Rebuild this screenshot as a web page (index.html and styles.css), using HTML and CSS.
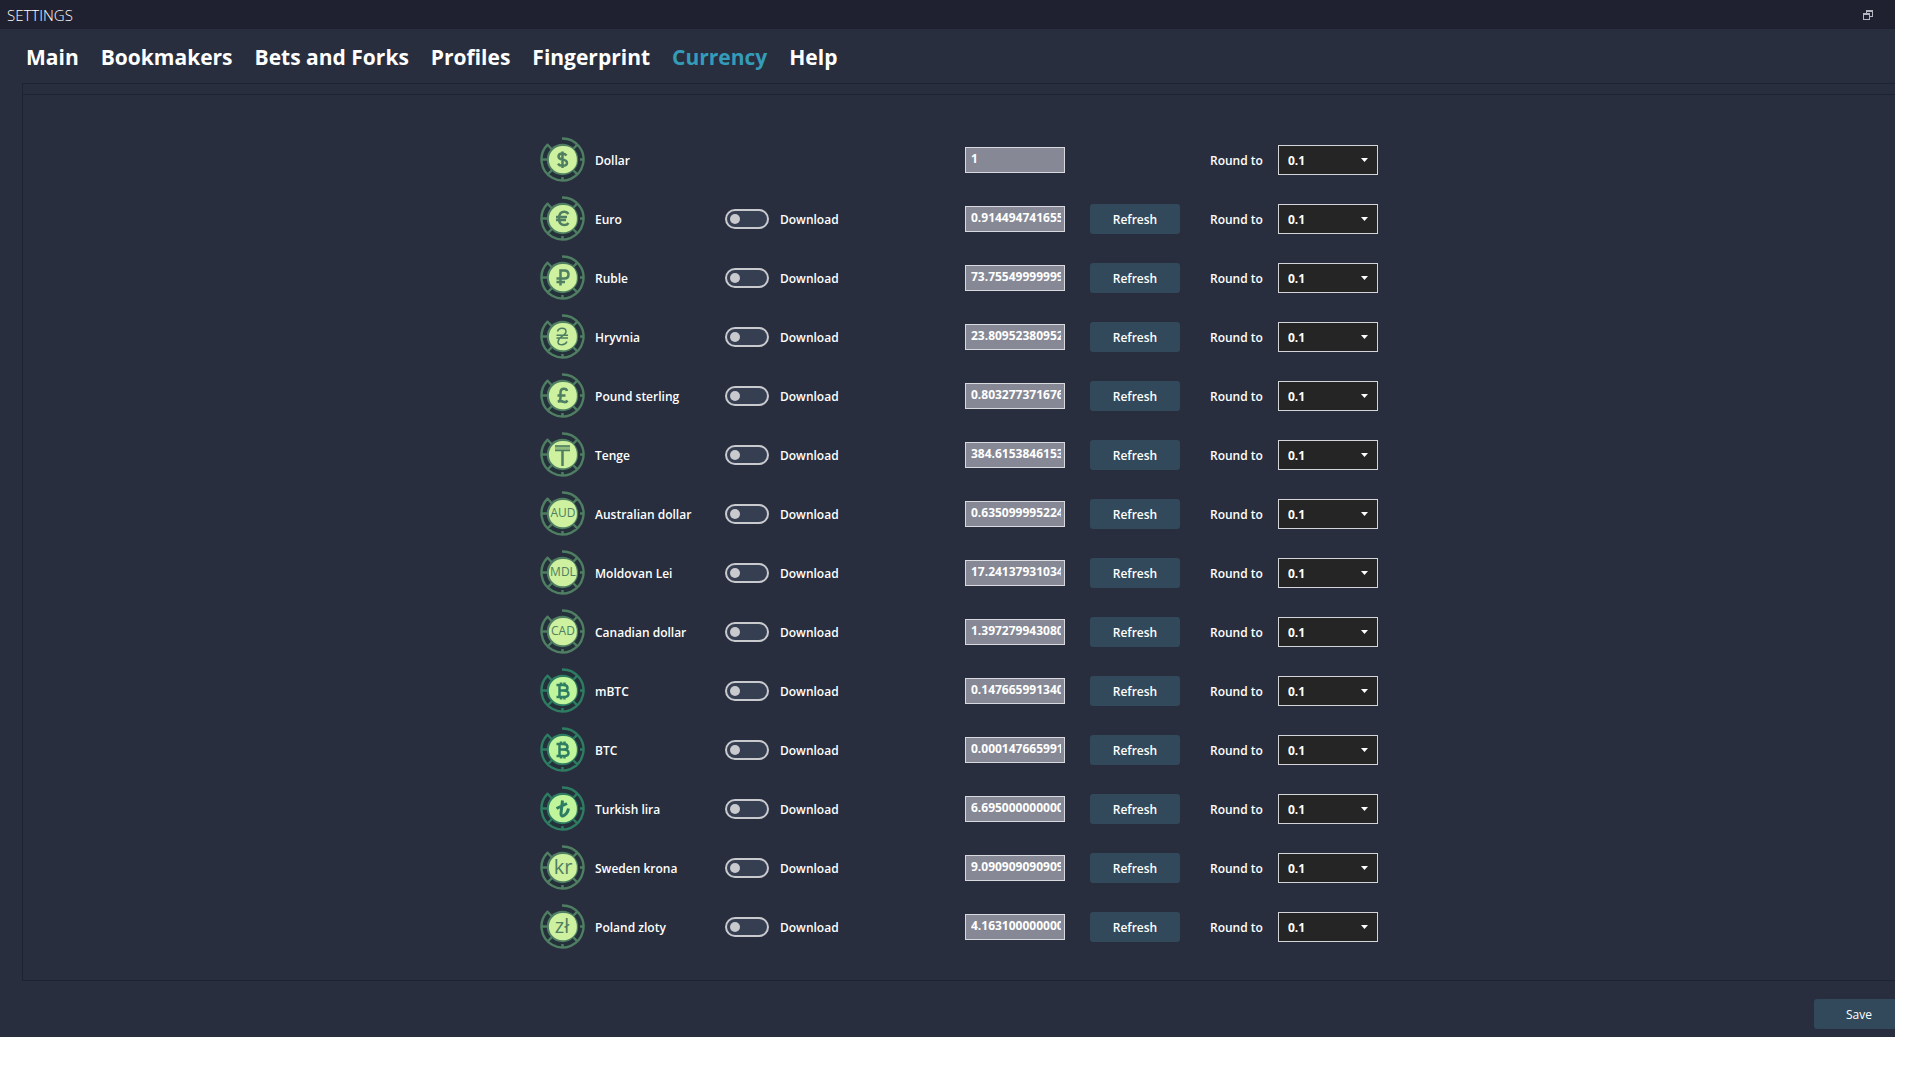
FILE: index.html
```html
<!DOCTYPE html>
<html lang="en">
<head>
<meta charset="utf-8">
<title>Settings</title>
<link rel="stylesheet" href="styles.css">
</head>
<body>
<svg class="defs" aria-hidden="true">
  <symbol id="coin" viewBox="0 0 45 45">
    <path class="ring-fill" d="M22.500 1.500A21 21 0 1 1 7.600 7.700L22.500 22.500z"/>
    <path class="ring" stroke-width="2.4" stroke-linejoin="round" d="M22 1.500A21 21 0 1 1 7.600 7.700L12 12.500M37.300 7.700L32.500 12.500M43.500 22.500H40M37.300 37.300L33 33M22.500 43.500V40M7.700 37.300L12 33M1.500 22.500H8"/>
    <circle class="rim" cx="22.500" cy="22.500" r="15.700"/>
    <path class="face" d="M22.500 9C28 8.800 32 10.500 34.500 14C37 18 37.500 23 36.300 27.500C34 33 28.500 36.500 22.500 36.300A13.600 13.600 0 0 1 22.500 9z"/>
  </symbol>
  <symbol id="btc" viewBox="0 0 45 45">
    <path class="sign" d="M16.500 17H23.500Q27.500 17 27.500 20Q27.500 22.500 23.500 22.500H19.500M23.500 22.500Q28.500 22.500 28.500 26Q28.500 29 23.500 29H16.500M19.500 17V29M21 14.500V17M24.500 14.500V17M21 29V31.500M24.500 29V31.500"/>
  </symbol>
</svg>
<div class="window">
  <header class="titlebar">
    <h1 class="title">SETTINGS</h1>
    <button class="restore" type="button" aria-label="Restore window">
      <svg width="10" height="10" viewBox="0 0 10 10"><path d="M3 0H10V7H7V6H9V2H4V3H3zM0 3H7V10H0zM1 5V9H6V5z" fill-rule="evenodd"/></svg>
    </button>
  </header>
  <nav class="tabs">
    <a href="#main">Main</a>
    <a href="#bookmakers">Bookmakers</a>
    <a href="#bets">Bets and Forks</a>
    <a href="#profiles">Profiles</a>
    <a href="#fingerprint">Fingerprint</a>
    <a href="#currency" class="active" aria-current="page">Currency</a>
    <a href="#help">Help</a>
  </nav>
  <form class="form">
    <main class="panel">
      <div class="list">
        <div class="row">
          <svg class="coin" viewBox="0 0 45 45"><use href="#coin"/><path class="sign" d="M26.500 18.500Q25 16.500 22.500 16.500Q18.500 16.500 18.500 19.500Q18.500 21.800 22.500 22.500Q27 23.300 27 26Q27 28.800 22.500 28.800Q19.500 28.800 18 26.700M22.500 14.500V31"/></svg>
          <label class="name" for="v1">Dollar</label>
          <input class="value" id="v1" type="text" value="1">
          <label class="round" for="r1">Round to</label>
          <select class="select" id="r1"><option>0.1</option></select>
        </div>
        <div class="row">
          <svg class="coin" viewBox="0 0 45 45"><use href="#coin"/><path class="sign" d="M28.500 18Q27 15.800 24.500 15.800Q19 15.800 19 22.500Q19 29 24.500 29Q27 29 28.500 27M16 21H27M16 24H26"/></svg>
          <label class="name" for="v2">Euro</label>
          <input class="toggle" id="d2" type="checkbox"><label class="download" for="d2">Download</label>
          <input class="value" id="v2" type="text" value="0.914494741655">
          <button class="button" type="button">Refresh</button>
          <label class="round" for="r2">Round to</label>
          <select class="select" id="r2"><option>0.1</option></select>
        </div>
        <div class="row">
          <svg class="coin" viewBox="0 0 45 45"><use href="#coin"/><path class="sign" d="M20.500 30.500V15.500H24.500Q28.500 15.500 28.500 19.500Q28.500 23.500 24.500 23.500H16.500M16.500 27H25"/></svg>
          <label class="name" for="v3">Ruble</label>
          <input class="toggle" id="d3" type="checkbox"><label class="download" for="d3">Download</label>
          <input class="value" id="v3" type="text" value="73.7554999999999">
          <button class="button" type="button">Refresh</button>
          <label class="round" for="r3">Round to</label>
          <select class="select" id="r3"><option>0.1</option></select>
        </div>
        <div class="row">
          <svg class="coin" viewBox="0 0 45 45"><use href="#coin"/><path class="sign thin" d="M17.500 17.500Q18.500 14.300 22 14.300Q26 14.300 26 17.500Q26 20 21.500 22.500Q18 25 18 28Q18 30.800 22 30.800Q25.500 30.800 27 27.500M16.500 21.200H28M16.500 24H28"/></svg>
          <label class="name" for="v4">Hryvnia</label>
          <input class="toggle" id="d4" type="checkbox"><label class="download" for="d4">Download</label>
          <input class="value" id="v4" type="text" value="23.8095238095238">
          <button class="button" type="button">Refresh</button>
          <label class="round" for="r4">Round to</label>
          <select class="select" id="r4"><option>0.1</option></select>
        </div>
        <div class="row">
          <svg class="coin" viewBox="0 0 45 45"><use href="#coin"/><path class="sign" d="M27 18Q26.500 15.800 24 15.800Q20.500 15.800 20.500 19.500V25Q20.500 28 17.800 28.700Q21 27.500 23.500 28.800Q26 29.800 27.500 27.500M17.500 22.500H25.500"/></svg>
          <label class="name" for="v5">Pound sterling</label>
          <input class="toggle" id="d5" type="checkbox"><label class="download" for="d5">Download</label>
          <input class="value" id="v5" type="text" value="0.803277371676">
          <button class="button" type="button">Refresh</button>
          <label class="round" for="r5">Round to</label>
          <select class="select" id="r5"><option>0.1</option></select>
        </div>
        <div class="row">
          <svg class="coin" viewBox="0 0 45 45"><use href="#coin"/><path class="tint" d="M15 13.500H30V19H15z"/><path class="sign thin" d="M15 14H30M15 18.500H30"/><path class="sign" d="M22.500 18.500V34"/></svg>
          <label class="name" for="v6">Tenge</label>
          <input class="toggle" id="d6" type="checkbox"><label class="download" for="d6">Download</label>
          <input class="value" id="v6" type="text" value="384.615384615385">
          <button class="button" type="button">Refresh</button>
          <label class="round" for="r6">Round to</label>
          <select class="select" id="r6"><option>0.1</option></select>
        </div>
        <div class="row">
          <svg class="coin" viewBox="0 0 45 45"><use href="#coin"/><text class="code" x="23" y="26">AUD</text></svg>
          <label class="name" for="v7">Australian dollar</label>
          <input class="toggle" id="d7" type="checkbox"><label class="download" for="d7">Download</label>
          <input class="value" id="v7" type="text" value="0.635099995224">
          <button class="button" type="button">Refresh</button>
          <label class="round" for="r7">Round to</label>
          <select class="select" id="r7"><option>0.1</option></select>
        </div>
        <div class="row">
          <svg class="coin" viewBox="0 0 45 45"><use href="#coin"/><text class="code" x="23" y="26">MDL</text></svg>
          <label class="name" for="v8">Moldovan Lei</label>
          <input class="toggle" id="d8" type="checkbox"><label class="download" for="d8">Download</label>
          <input class="value" id="v8" type="text" value="17.2413793103448">
          <button class="button" type="button">Refresh</button>
          <label class="round" for="r8">Round to</label>
          <select class="select" id="r8"><option>0.1</option></select>
        </div>
        <div class="row">
          <svg class="coin" viewBox="0 0 45 45"><use href="#coin"/><text class="code" x="23" y="26">CAD</text></svg>
          <label class="name" for="v9">Canadian dollar</label>
          <input class="toggle" id="d9" type="checkbox"><label class="download" for="d9">Download</label>
          <input class="value" id="v9" type="text" value="1.397279943080">
          <button class="button" type="button">Refresh</button>
          <label class="round" for="r9">Round to</label>
          <select class="select" id="r9"><option>0.1</option></select>
        </div>
        <div class="row">
          <svg class="coin deep" viewBox="0 0 45 45"><use href="#coin"/><use href="#btc"/></svg>
          <label class="name" for="v10">mBTC</label>
          <input class="toggle" id="d10" type="checkbox"><label class="download" for="d10">Download</label>
          <input class="value" id="v10" type="text" value="0.147665991340">
          <button class="button" type="button">Refresh</button>
          <label class="round" for="r10">Round to</label>
          <select class="select" id="r10"><option>0.1</option></select>
        </div>
        <div class="row">
          <svg class="coin deep" viewBox="0 0 45 45"><use href="#coin"/><use href="#btc"/></svg>
          <label class="name" for="v11">BTC</label>
          <input class="toggle" id="d11" type="checkbox"><label class="download" for="d11">Download</label>
          <input class="value" id="v11" type="text" value="0.000147665991">
          <button class="button" type="button">Refresh</button>
          <label class="round" for="r11">Round to</label>
          <select class="select" id="r11"><option>0.1</option></select>
        </div>
        <div class="row">
          <svg class="coin deep" viewBox="0 0 45 45"><use href="#coin"/><path class="sign heavy" d="M22.500 14.500L21 27Q20.800 30.500 23 30Q27.500 28 28.500 22.500M16.500 22.500L27 17.500"/></svg>
          <label class="name" for="v12">Turkish lira</label>
          <input class="toggle" id="d12" type="checkbox"><label class="download" for="d12">Download</label>
          <input class="value" id="v12" type="text" value="6.695000000000">
          <button class="button" type="button">Refresh</button>
          <label class="round" for="r12">Round to</label>
          <select class="select" id="r12"><option>0.1</option></select>
        </div>
        <div class="row">
          <svg class="coin" viewBox="0 0 45 45"><use href="#coin"/><text class="code large" x="23" y="29">kr</text></svg>
          <label class="name" for="v13">Sweden krona</label>
          <input class="toggle" id="d13" type="checkbox"><label class="download" for="d13">Download</label>
          <input class="value" id="v13" type="text" value="9.090909090909">
          <button class="button" type="button">Refresh</button>
          <label class="round" for="r13">Round to</label>
          <select class="select" id="r13"><option>0.1</option></select>
        </div>
        <div class="row">
          <svg class="coin" viewBox="0 0 45 45"><use href="#coin"/><text class="code large" x="22" y="29">zł</text></svg>
          <label class="name" for="v14">Poland zloty</label>
          <input class="toggle" id="d14" type="checkbox"><label class="download" for="d14">Download</label>
          <input class="value" id="v14" type="text" value="4.163100000000">
          <button class="button" type="button">Refresh</button>
          <label class="round" for="r14">Round to</label>
          <select class="select" id="r14"><option>0.1</option></select>
        </div>
      </div>
    </main>
    <footer class="footer">
      <button class="button save" type="submit">Save</button>
    </footer>
  </form>
</div>
</body>
</html>
```
FILE: styles.css
```css
* {
  box-sizing: border-box;
}

body {
  margin: 0;
  padding-right: 25px;
  background: #fff;
  color: #fff;
  font: 600 12px/18px "Open Sans", "Noto Sans", sans-serif;
}

input,
button,
select {
  font: inherit;
  color: inherit;
}

.defs {
  display: none;
}

.window {
  overflow: hidden;
  background: #282e3e;
}

.titlebar {
  display: flex;
  align-items: center;
  justify-content: space-between;
  height: 29px;
  padding: 0 22px 0 7px;
  background: #1f2131;
}

.title {
  margin: 0;
  font-size: 15px;
  font-weight: 300;
}

.restore {
  display: flex;
  padding: 0;
  border: 0;
  background: none;
  fill: #b4b5bf;
}

.tabs {
  display: flex;
  gap: 22px;
  height: 54px;
  padding: 13px 26px 0;
}

.tabs a {
  color: #fff;
  font-size: 21px;
  font-weight: 700;
  line-height: 30px;
  text-decoration: none;
}

.tabs .active {
  color: #349bb9;
}

.panel {
  margin-left: 22px;
  padding-top: 10px;
  border: solid #1e2231;
  border-width: 1px 0 1px 1px;
}

.list {
  display: flex;
  flex-direction: column;
  align-items: center;
  padding: 35px 0 24px;
  border-top: 1px solid #1e2231;
}

.row {
  display: grid;
  grid-template-columns: 55px 130px 55px 185px 125px 120px 68px 100px;
  align-items: center;
  height: 59px;
}

.row label {
  padding-top: 2px;
}

.coin {
  --ink: #4f7e62;
  --face: #cdf19e;
  width: 45px;
  height: 45px;
}

.coin.deep {
  --ink: #2e7d63;
  --face: #c0f59b;
}

.ring-fill {
  fill: #24303a;
}

.ring {
  fill: none;
  stroke: var(--ink);
}

.rim {
  fill: var(--ink);
}

.face {
  fill: var(--face);
}

.sign {
  fill: none;
  stroke: var(--ink);
  stroke-width: 2.5;
}

.sign.thin {
  stroke-width: 1.5;
}

.sign.heavy {
  stroke-width: 3;
}

.tint {
  fill: #8fbb7f;
}

.code {
  fill: var(--ink);
  font-size: 12px;
  font-weight: 400;
  text-anchor: middle;
}

.code.large {
  font-size: 20px;
}

.name {
  grid-column: 2;
}

.toggle {
  appearance: none;
  display: flex;
  align-items: center;
  width: 44px;
  height: 20px;
  margin: 0;
  padding: 0 3px;
  border: 2px solid #c9cace;
  border-radius: 10px;
  background: #363f52;
}

.toggle::before {
  content: "";
  width: 10px;
  height: 10px;
  border-radius: 50%;
  background: #c9cace;
}

.toggle:checked::before {
  margin-left: auto;
}

.value {
  grid-column: 5;
  width: 100px;
  height: 26px;
  padding: 0 3px 2px 5px;
  border: 1px solid #d9dadf;
  border-radius: 0;
  background: #868995;
  font-weight: 700;
}

.button {
  width: 90px;
  height: 30px;
  padding: 2px 0 0;
  border: 0;
  border-radius: 3px;
  background: #32495c;
}

.round {
  grid-column: 7;
}

.select {
  appearance: none;
  width: 100px;
  height: 30px;
  padding: 2px 9px 0;
  border: 1px solid #d4d5d8;
  border-radius: 0;
  background: #252526 url("data:image/svg+xml,%3Csvg xmlns='http://www.w3.org/2000/svg' viewBox='0 0 7 4'%3E%3Cpath d='M0 0h7L3.500 4z' fill='%23fff'/%3E%3C/svg%3E") no-repeat right 9px center / 7px 4px;
  font-weight: 700;
}

.footer {
  display: flex;
  justify-content: flex-end;
  margin-right: -9px;
  padding: 18px 0 8px;
}

.save {
  font-weight: 400;
}
```
